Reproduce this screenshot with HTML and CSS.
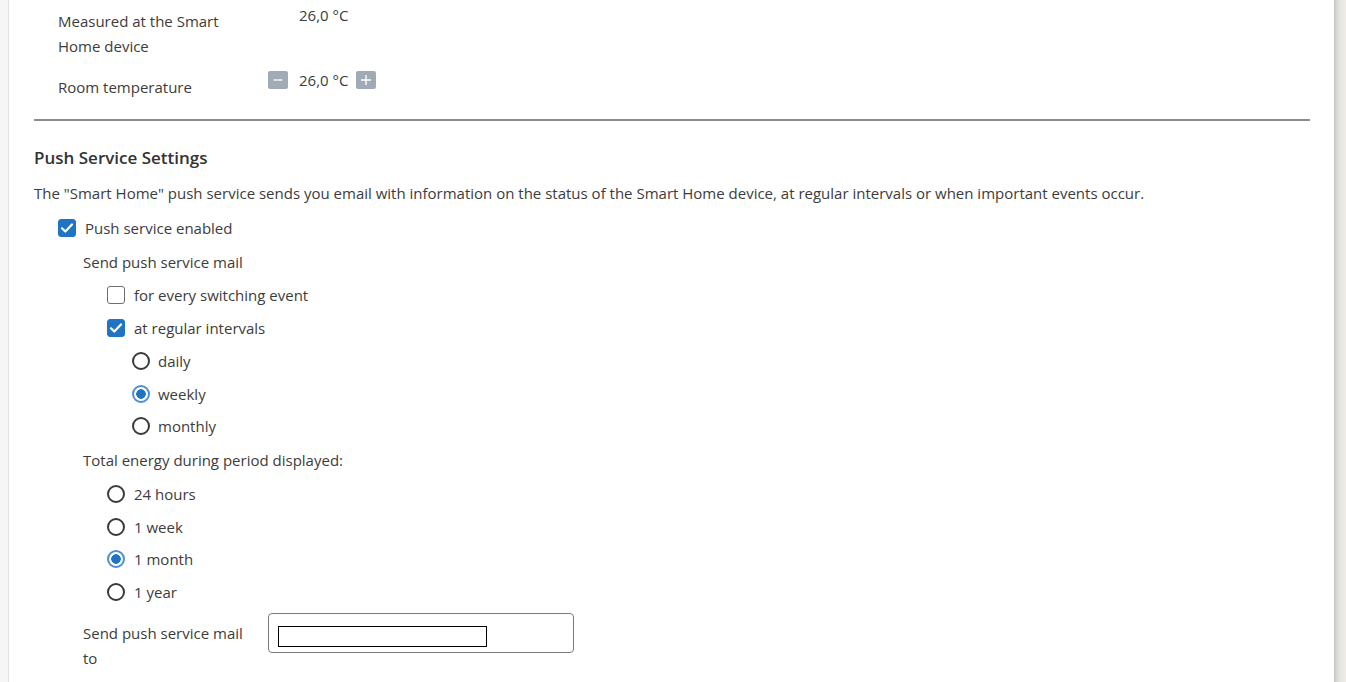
FILE: index.html
```html
<!DOCTYPE html>
<html lang="en">
<head>
<meta charset="utf-8">
<title>Smart Home</title>
<link rel="stylesheet" href="styles.css">
</head>
<body>
<div class="page">
  <main class="card">
    <div class="trow trow-first">
      <div class="tlabel">Measured at the Smart<br>Home device</div>
      <div class="tvalue tvalue-plain">26,0 °C</div>
    </div>
    <div class="trow trow-second">
      <div class="tlabel">Room temperature</div>
      <div class="tvalue tvalue-step">
        <span class="stepbtn"><svg width="12" height="12" viewBox="0 0 12 12"><path d="M1.5 6h9" stroke="#fff" stroke-width="1.3"/></svg></span>
        <span class="stepval">26,0 °C</span>
        <span class="stepbtn"><svg width="12" height="12" viewBox="0 0 12 12"><path d="M1 6h10M6 1v10" stroke="#fff" stroke-width="1.3"/></svg></span>
      </div>
    </div>
    <div class="rule"></div>
    <h2 class="heading">Push Service Settings</h2>
    <p class="intro">The "Smart Home" push service sends you email with information on the status of the Smart Home device, at regular intervals or when important events occur.</p>

    <div class="opt ind1"><span class="cb on"><svg width="16" height="16" viewBox="0 0 16 16"><path d="M3 8.3l3.3 3.2 6.7-7" fill="none" stroke="#fff" stroke-width="2.2" stroke-linecap="round" stroke-linejoin="round"/></svg></span><span class="lbl lbl-cb">Push service enabled</span></div>
    <div class="opt ind2 gap1"><span class="lbl">Send push service mail</span></div>
    <div class="opt ind3"><span class="cb"></span><span class="lbl lbl-cb">for every switching event</span></div>
    <div class="opt ind3"><span class="cb on"><svg width="16" height="16" viewBox="0 0 16 16"><path d="M3 8.3l3.3 3.2 6.7-7" fill="none" stroke="#fff" stroke-width="2.2" stroke-linecap="round" stroke-linejoin="round"/></svg></span><span class="lbl lbl-cb">at regular intervals</span></div>
    <div class="opt ind4"><span class="rb"></span><span class="lbl lbl-rb">daily</span></div>
    <div class="opt ind4"><span class="rb on"></span><span class="lbl lbl-rb">weekly</span></div>
    <div class="opt ind4 short"><span class="rb"></span><span class="lbl lbl-rb">monthly</span></div>
    <div class="opt ind2 gap1"><span class="lbl">Total energy during period displayed:</span></div>
    <div class="opt ind3 gap1"><span class="rb"></span><span class="lbl lbl-rb2">24 hours</span></div>
    <div class="opt ind3"><span class="rb"></span><span class="lbl lbl-rb2">1 week</span></div>
    <div class="opt ind3 short"><span class="rb on"></span><span class="lbl lbl-rb2">1 month</span></div>
    <div class="opt ind3"><span class="rb"></span><span class="lbl lbl-rb2">1 year</span></div>

    <div class="mailrow">
      <div class="maillabel">Send push service mail<br>to</div>
      <div class="mailbox"><div class="mailinner"></div></div>
    </div>
  </main>
  <div class="edge"></div>
</div>
</body>
</html>
```

FILE: styles.css
```css
html, body {
  margin: 0;
  padding: 0;
  height: 100%;
  overflow: hidden;
}
body {
  background: #f6f6f6;
  font-family: "Open Sans", "Noto Sans", sans-serif;
  font-size: 15px;
  color: #3c3c3c;
}
.page {
  display: flex;
  height: 682px;
  padding-left: 8px;
}
.card {
  width: 1276px;
  background: #fff;
  border-left: 1px solid #e2e2e2;
  padding: 0 24px 0 25px;
}
.edge {
  width: 12px;
  background: linear-gradient(to right, #c6c6c6 0%, #dcdcdc 30%, #e9e7e3 60%, #efece7 100%);
}
.trow {
  display: grid;
  grid-template-columns: 210px 1fr;
  margin-left: 24px;
  line-height: 25px;
}
.trow-first .tlabel { padding-top: 9px; }
.tvalue-plain { padding-top: 3px; padding-left: 31px; }
.trow-second .tlabel { padding-top: 16px; }
.tvalue-step {
  display: flex;
  align-items: center;
  height: 18px;
  margin-top: 12px;
}
.stepbtn {
  width: 20px;
  height: 18px;
  background: #a0abb6;
  border-radius: 2px;
  display: flex;
  align-items: center;
  justify-content: center;
}
.stepval { padding: 0 8px 0 11px; }
.rule {
  height: 2px;
  background: #8c8c8c;
  margin-top: 19px;
}
.heading {
  margin: 24px 0 0;
  font-size: 17px;
  font-weight: 600;
  line-height: 25px;
  color: #333;
}
.intro {
  margin: 11px 0 5px;
  line-height: 25px;
}
.opt {
  display: flex;
  align-items: center;
  height: 33px;
}
.opt.gap1 { margin-top: 1px; }
.opt.short { height: 32px; }
.ind1 { padding-left: 24px; }
.ind2 { padding-left: 49px; }
.ind3 { padding-left: 73px; }
.ind4 { padding-left: 98px; }
.cb {
  width: 18px;
  height: 18px;
  box-sizing: border-box;
  border: 1.5px solid #6e6e6e;
  border-radius: 3px;
  display: flex;
  align-items: center;
  justify-content: center;
  flex: none;
}
.cb.on {
  background: #1f74c3;
  border-color: #1f74c3;
}
.rb {
  width: 18px;
  height: 18px;
  box-sizing: border-box;
  border: 2px solid #3a3a3a;
  border-radius: 50%;
  flex: none;
}
.rb.on {
  border-color: #4a90d6;
  background: radial-gradient(circle, #1f74c3 0 4.5px, #fff 5px);
}
.lbl-cb { margin-left: 9px; }
.lbl-rb { margin-left: 8px; }
.lbl-rb2 { margin-left: 9px; }
.mailrow {
  display: grid;
  grid-template-columns: 185px 306px;
  margin-left: 49px;
  margin-top: 5px;
}
.maillabel {
  line-height: 25px;
  padding-top: 8px;
}
.mailbox {
  height: 40px;
  box-sizing: border-box;
  border: 1px solid #7a7a7a;
  border-radius: 4px;
  padding: 12px 0 0 9px;
}
.mailinner {
  width: 209px;
  height: 21px;
  box-sizing: border-box;
  border: 1px solid #000;
}
```
